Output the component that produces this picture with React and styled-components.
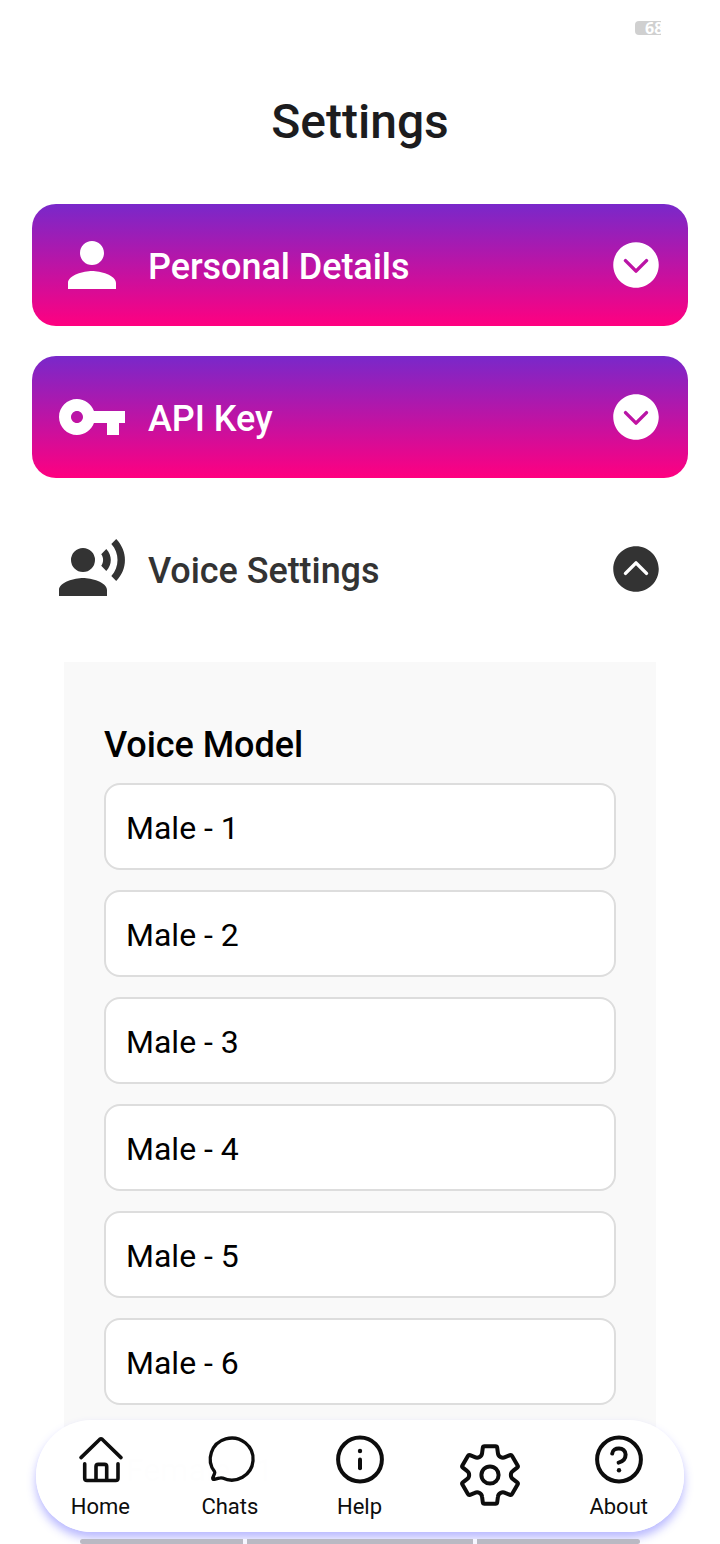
import React from "react";
import styled, { createGlobalStyle } from "styled-components";

const GlobalStyle = createGlobalStyle`
  *, *::before, *::after { box-sizing: border-box; }
  html, body { margin: 0; padding: 0; background: #fff; }
  body { font-family: Roboto, "Liberation Sans", sans-serif; }
`;

const Screen = styled.div`
  position: relative;
  width: 720px;
  height: 1544px;
  overflow: hidden;
  background: #fff;
`;

const StatusBar = styled.div`
  display: flex;
  justify-content: flex-end;
  height: 56px;
  padding: 21px 59px 0 0;
`;

const Battery = styled.div`
  width: 26px;
  height: 14px;
  padding-left: 10px;
  overflow: hidden;
  border-radius: 4px 0 0 4px;
  background: #d0d0d0;
  color: #fff;
  font: 700 16px/14px "Open Sans", sans-serif;
`;

const Header = styled.header`
  display: flex;
  align-items: center;
  justify-content: center;
  height: 132px;
`;

const PageTitle = styled.h1`
  margin: 0;
  color: #1c1c1e;
  font-size: 48px;
  font-weight: 500;
  line-height: 56px;
`;

const Content = styled.main`
  height: 1344px;
  padding: 16px 32px 0;
  overflow: hidden;
`;

const Sections = styled.div`
  display: flex;
  flex-direction: column;
  gap: 30px;
`;

const SectionRow = styled.div`
  display: flex;
  align-items: center;
  height: 122px;
  padding: 0 24px;
  border-radius: 24px;
  color: ${(p) => (p.$open ? "#333" : "#fff")};
  background: ${(p) => (p.$open ? "transparent" : "linear-gradient(#7928ca, #ff0080)")};
`;

const SectionTitle = styled.h2`
  flex: 1;
  margin: 0;
  padding: 3px 0 0 20px;
  font-size: 36px;
  font-weight: 500;
  line-height: 44px;
  letter-spacing: -0.06px;
`;

const Glyph = styled.svg`
  display: block;
  flex: none;
  width: ${(p) => p.$size}px;
  height: ${(p) => p.$size}px;
`;

const Panel = styled.section`
  margin: 32px 32px 0;
  padding: 61px 40px 0;
  background: #f9f9f9;
`;

const PanelTitle = styled.h3`
  margin: 0 0 16px;
  color: #000;
  font-size: 36px;
  font-weight: 500;
  line-height: 44px;
  letter-spacing: -0.06px;
`;

const Options = styled.div`
  display: flex;
  flex-direction: column;
  gap: 20px;
`;

const Option = styled.div`
  display: flex;
  align-items: center;
  height: 87px;
  padding: 2px 20px 0;
  border: 2px solid #ddd;
  border-radius: 16px;
  background: #fff;
  color: #000;
  font-size: 32px;
`;

const TabBar = styled.nav`
  position: absolute;
  left: 36px;
  bottom: 12px;
  display: grid;
  grid-template-columns: repeat(5, 1fr);
  width: 648px;
  height: 112px;
  border-radius: 56px;
  background: rgba(255, 255, 255, 0.996);
  box-shadow: 0 6px 10px rgba(60, 60, 255, 0.36);
`;

const Tab = styled.div`
  display: flex;
  flex-direction: column;
  align-items: center;
  justify-content: ${(p) => (p.$iconOnly ? "center" : "flex-start")};
  padding: ${(p) => (p.$iconOnly ? "0 0 2px" : "10px 0 0")};
  color: #0d0d0d;
`;

const TabLabel = styled.span`
  margin: 3px 0 0 -1px;
  font-size: 22px;
  line-height: 28px;
`;

const GestureBar = styled.div`
  position: absolute;
  left: 80px;
  bottom: 0;
  display: grid;
  grid-template-columns: 163px 226px 163px;
  gap: 4px;
  height: 5px;
  overflow: hidden;
  border-radius: 3px;
  background: #f6f6ff;
`;

const GestureSegment = styled.span`
  background: #b9b9c3;
`;

const materialPaths = {
  person:
    "M12 12c2.21 0 4-1.79 4-4s-1.79-4-4-4-4 1.79-4 4 1.79 4 4 4zm0 2c-2.67 0-8 1.34-8 4v2h16v-2c0-2.66-5.33-4-8-4z",
  key: "M12.65 10C11.83 7.67 9.61 6 7 6c-3.31 0-6 2.69-6 6s2.69 6 6 6c2.61 0 4.83-1.67 5.65-4H17v4h4v-4h2v-4H12.65zM7 14c-1.1 0-2-.9-2-2s.9-2 2-2 2 .9 2 2-.9 2-2 2z",
  voice:
    "M9 5a4 4 0 1 0 0 8 4 4 0 0 0 0-8zM9 15c-2.67 0-8 1.34-8 4v2h16v-2c0-2.66-5.33-4-8-4zm7.76-9.64l-1.68 1.69c.84 1.18.84 2.71 0 3.89l1.68 1.69c2.02-2.02 2.02-5.07 0-7.27zM20.07 2l-1.63 1.63c2.77 3.02 2.77 7.56 0 10.74L20.07 16c3.9-3.89 3.91-9.95 0-14z",
};

function MaterialIcon({ name }) {
  return (
    <Glyph $size={72} viewBox="0 0 24 24" fill="currentColor">
      <path d={materialPaths[name]} />
    </Glyph>
  );
}

function ChevronCircle({ up }) {
  return (
    <Glyph $size={56} viewBox="0 0 512 512" fill="currentColor">
      <path
        transform={up ? "rotate(180 256 256)" : undefined}
        d="M464 256c0-114.87-93.13-208-208-208S48 141.13 48 256s93.13 208 208 208 208-93.13 208-208zm-100.69-28.69l-96 96a16 16 0 01-22.62 0l-96-96a16 16 0 0122.62-22.62L256 289.37l84.69-84.68a16 16 0 0122.62 22.62z"
      />
    </Glyph>
  );
}

/* One tooth and the valley after it, turned six times round the centre. */
function gearOutline() {
  const at = (x, y, turn) => {
    const a = (turn * Math.PI) / 3;
    const px = x * Math.cos(a) - y * Math.sin(a);
    const py = x * Math.sin(a) + y * Math.cos(a);
    return `${px.toFixed(2)} ${py.toFixed(2)}`;
  };
  let d = "";
  for (let i = 0; i < 6; i += 1) {
    d += `${i ? "L" : "M"}${at(-7.9, -22, i)}L${at(-7.2, -27.2, i)}`;
    d += `Q${at(-7, -28.7, i)} ${at(-5.5, -28.7, i)}L${at(5.5, -28.7, i)}`;
    d += `Q${at(7, -28.7, i)} ${at(7.2, -27.2, i)}L${at(7.9, -22, i)}`;
    d += `C${at(8.2, -18.5, i)} ${at(-8.2, -18.5, i + 1)} ${at(-7.9, -22, i + 1)}`;
  }
  return `${d}Z`;
}

const stroke = {
  fill: "none",
  stroke: "currentColor",
  strokeLinecap: "round",
  strokeLinejoin: "round",
};

function HomeIcon() {
  return (
    <Glyph $size={60} viewBox="0 0 60 60" {...stroke} strokeWidth="3.6">
      <path d="M10 27.6L28.9 9.2Q30 8.3 31.1 9.2L50 27.6" />
      <path d="M13.7 33.8V48.2Q13.7 50.5 16 50.5H44.7Q47 50.5 47 48.2V33.8" />
      <path d="M25 50.2V36.6Q25 34.4 27.2 34.4H33.5Q35.7 34.4 35.7 36.6V50.2" />
    </Glyph>
  );
}

function ChatIcon() {
  return (
    <Glyph $size={60} viewBox="-0.6 0 60 60" {...stroke} strokeWidth="3.3">
      <path d="M13.9 41.6A21.4 21 0 1 1 22 48.1Q20.3 47.6 18.4 48.2L13.8 49.4Q11.9 49.8 12.1 48L14 43.4Q14.4 42.4 13.9 41.6Z" />
    </Glyph>
  );
}

function InfoIcon() {
  return (
    <Glyph $size={60} viewBox="0 0 60 60" {...stroke} strokeWidth="4">
      <circle cx="30" cy="29.5" r="21.9" />
      <path d="M30 29.4V38.2" />
      <circle cx="30" cy="21" r="2.2" fill="currentColor" stroke="none" />
    </Glyph>
  );
}

function HelpIcon() {
  return (
    <Glyph $size={60} viewBox="0 0 60 60" {...stroke} strokeWidth="4">
      <circle cx="30" cy="29.5" r="21.9" />
      <path d="M23.2 23.6C23.8 16.4 36.6 16.8 36.6 24.6C36.6 28.9 33.4 31.7 29.6 32.6" />
      <circle cx="30" cy="40.3" r="2.2" fill="currentColor" stroke="none" />
    </Glyph>
  );
}

function GearIcon() {
  return (
    <Glyph $size={64} viewBox="-32 -32 64 64" {...stroke} strokeWidth="4">
      <path d={gearOutline()} />
      <circle r="8.6" />
    </Glyph>
  );
}

const voices = ["Male - 1", "Male - 2", "Male - 3", "Male - 4", "Male - 5", "Male - 6", "Female - 1"];

const tabs = [
  { label: "Home", Icon: HomeIcon },
  { label: "Chats", Icon: ChatIcon },
  { label: "Help", Icon: InfoIcon },
  { label: null, Icon: GearIcon },
  { label: "About", Icon: HelpIcon },
];

function Section({ icon, title, open }) {
  return (
    <SectionRow $open={open}>
      <MaterialIcon name={icon} />
      <SectionTitle>{title}</SectionTitle>
      <ChevronCircle up={open} />
    </SectionRow>
  );
}

export default function App() {
  return (
    <Screen>
      <GlobalStyle />
      <StatusBar>
        <Battery>68</Battery>
      </StatusBar>
      <Header>
        <PageTitle>Settings</PageTitle>
      </Header>
      <Content>
        <Sections>
          <Section icon="person" title="Personal Details" />
          <Section icon="key" title="API Key" />
          <Section icon="voice" title="Voice Settings" open />
        </Sections>
        <Panel>
          <PanelTitle>Voice Model</PanelTitle>
          <Options>
            {voices.map((voice) => (
              <Option key={voice}>{voice}</Option>
            ))}
          </Options>
        </Panel>
      </Content>
      <TabBar>
        {tabs.map(({ label, Icon }) => (
          <Tab key={label || "Settings"} $iconOnly={!label}>
            <Icon />
            {label && <TabLabel>{label}</TabLabel>}
          </Tab>
        ))}
      </TabBar>
      <GestureBar>
        <GestureSegment />
        <GestureSegment />
        <GestureSegment />
      </GestureBar>
    </Screen>
  );
}
